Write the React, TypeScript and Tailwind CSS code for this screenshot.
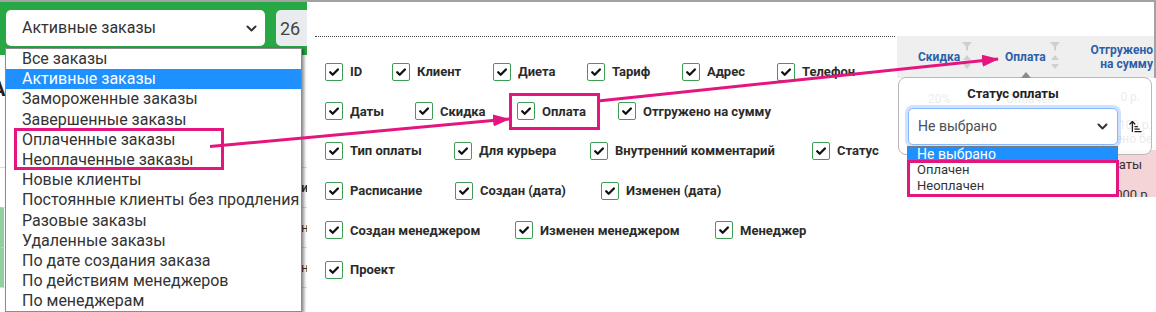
import { ArrowUpNarrowWide } from "lucide-react";

const orderFilters = [
  "Все заказы",
  "Активные заказы",
  "Замороженные заказы",
  "Завершенные заказы",
  "Оплаченные заказы",
  "Неоплаченные заказы",
  "Новые клиенты",
  "Постоянные клиенты без продления",
  "Разовые заказы",
  "Удаленные заказы",
  "По дате создания заказа",
  "По действиям менеджеров",
  "По менеджерам",
];

// label + width of the slot (distance to next checkbox)
const columnRows: [string, string][][] = [
  [["ID", "w-[67px]"], ["Клиент", "w-[101px]"], ["Диета", "w-[94px]"], ["Тариф", "w-[95px]"], ["Адрес", "w-[95px]"], ["Телефон", ""]],
  [["Даты", "w-[90px]"], ["Скидка", "w-[102px]"], ["Оплата", "w-[101px]"], ["Отгружено на сумму", ""]],
  [["Тип оплаты", "w-[129px]"], ["Для курьера", "w-[136px]"], ["Внутренний комментарий", "w-[222px]"], ["Статус", ""]],
  [["Расписание", "w-[130px]"], ["Создан (дата)", "w-[146px]"], ["Изменен (дата)", ""]],
  [["Создан менеджером", "w-[190px]"], ["Изменен менеджером", "w-[200px]"], ["Менеджер", ""]],
  [["Проект", ""]],
];

function Chevron() {
  return (
    <svg width="11" height="7" viewBox="0 0 11 7">
      <path d="M1.5 1.5l4 4 4-4" stroke="#333" strokeWidth="2" fill="none" strokeLinecap="round" strokeLinejoin="round" />
    </svg>
  );
}

function Funnel() {
  return (
    <svg width="10" height="9" viewBox="0 0 10 9">
      <path d="M0 0h10L6 4.5V9L4 8V4.5z" fill="#cfcfcf" />
    </svg>
  );
}

function Tri({ up }: { up?: boolean }) {
  return (
    <svg width="8" height="5" viewBox="0 0 8 5">
      <path d={up ? "M0 5L4 0l4 5z" : "M0 0h8L4 5z"} fill="#cfcfcf" />
    </svg>
  );
}

function Check() {
  return (
    <span className="flex h-[18px] w-[18px] shrink-0 items-center justify-center rounded-[2px] border-[1.5px] border-[#3f9e55] bg-white">
      <svg width="12" height="12" viewBox="0 0 12 12">
        <path d="M2.2 6.3l2.5 2.5L9.9 3.5" stroke="#111" strokeWidth="2.3" fill="none" strokeLinecap="round" strokeLinejoin="round" />
      </svg>
    </span>
  );
}

function OrdersPanel() {
  return (
    <div className="relative h-full w-[307px] shrink-0 overflow-hidden bg-white">
      <div className="flex h-[55px] items-start gap-[11px] bg-[#28a745] pl-[6px] pt-[10px]">
        <div className="flex h-[36px] w-[259px] shrink-0 items-center justify-between rounded-[5px] bg-white pl-[16px] pr-[8px] text-[16px] text-[#333]">
          Активные заказы
          <Chevron />
        </div>
        <div className="flex h-[36px] w-[50px] shrink-0 items-center rounded-l-[5px] bg-[#e9ecef] pl-[4px] text-[18px] text-[#444]">
          26
        </div>
      </div>

      {/* страница под выпадающим списком */}
      <div className="pt-[22px]">
        <h2 className="-ml-[8px] text-[20px] font-bold leading-[24px] text-[#222]">Активные заказы</h2>
        <div className="mt-[66px]">
          <div className="h-[40px] border-t border-[#dcdcdc] pl-[301px] pt-[10px] text-[13px] font-bold whitespace-nowrap">ис</div>
          <div className="h-[40px] border-t border-l-4 border-[#dcdcdc] border-l-[#8fd19e] pl-[297px] pt-[10px] text-[13px] whitespace-nowrap">не</div>
          <div className="h-[40px] border-t border-l-4 border-[#dcdcdc] border-l-[#8fd19e] pl-[297px] pt-[10px] text-[13px] whitespace-nowrap">не</div>
          <div className="h-[20px] border-t border-[#dcdcdc]" />
        </div>
      </div>

      <ul className="absolute left-[5px] top-[48px] w-[297px] border border-[#8c8c8c] bg-white shadow-[2px_1px_3px_rgba(0,0,0,0.45)]">
        {orderFilters.map((f, i) => (
          <li
            key={f}
            className={
              i === 1
                ? "h-[20.2px] whitespace-nowrap bg-[#1e90ff] pl-[16px] text-[16px] leading-[20px] text-white"
                : "h-[20.2px] whitespace-nowrap pl-[16px] text-[16px] leading-[20px] text-[#333]"
            }
          >
            {f}
          </li>
        ))}
      </ul>
    </div>
  );
}

function ColumnsPanel() {
  return (
    <div className="h-full w-[590px] shrink-0 bg-white pt-[36px]">
      <div className="ml-[8px] w-[580px] border-t border-dotted border-[#444]" />
      <div className="mt-[15px] flex flex-col pl-[18px]">
        {columnRows.map((row, r) => (
          <div key={r} className="flex h-[39.6px] items-center">
            {row.map(([label, w]) => (
              <div key={label} className={`flex shrink-0 items-center gap-[7px] ${w}`}>
                <Check />
                <span className="whitespace-nowrap text-[13px] font-bold leading-none text-[#2b2b2b]">{label}</span>
              </div>
            ))}
          </div>
        ))}
      </div>
    </div>
  );
}

function TablePanel() {
  return (
    <div className="relative h-full w-[259px] shrink-0 bg-white">
      <div className="h-[36px] border-r-2 border-[#a2a2a2]" />
      <div className="flex h-[42px] border-r-2 border-[#a2a2a2] bg-[#efefef] text-[12px] font-bold text-[#2d5fa8]">
        <div className="flex w-[78px] shrink-0 items-stretch gap-[2px] pl-[21px]">
          <span className="self-center">Скидка</span>
          <div className="flex flex-col items-center gap-[4px] pt-[6px]">
            <Funnel />
            <Tri up />
            <Tri />
          </div>
        </div>
        <div className="flex w-[93px] shrink-0 items-stretch gap-[4px] pl-[30px]">
          <span className="self-center">Оплата</span>
          <div className="flex flex-col items-center gap-[4px] pt-[6px]">
            <Funnel />
            <Tri up />
            <Tri />
          </div>
        </div>
        <div className="flex-1 pr-[1px] pt-[7px] text-right leading-[14px]">
          Отгружено
          <br />
          на сумму
        </div>
      </div>

      <div className="flex h-[72px] text-[12px] text-[#777]">
        <div className="w-[78px] shrink-0 pl-[31px] pt-[12px]">20%</div>
        <div className="w-[93px] shrink-0 pl-[31px] pt-[12px]">Оплачен</div>
        <div className="flex-1 pr-[4px] pt-[12px] text-right leading-[14px]">
          <div className="pr-[12px]">0 р.</div>
          <div className="mt-[14px]">100 р.</div>
          <div className="whitespace-nowrap">Отгружено бе</div>
        </div>
      </div>

      <div className="flex h-[47px] overflow-hidden">
        <div className="w-[83px] shrink-0" />
        <div className="flex flex-1 flex-col justify-between bg-[#f4d4d7] text-[13px] text-[#333]">
          <div className="pr-[14px] pt-[5px] text-right">оплаты</div>
          <div className="-mb-[5px] flex justify-between pl-[10px] pr-[5px] leading-[14px]">
            <span className="text-[11px] text-[#555]">Стоим.: 26000 р.</span>
            <span>19000 р.</span>
          </div>
        </div>
      </div>

      {/* поповер фильтра */}
      <div className="absolute left-[1px] top-[77px] h-[78px] w-[254px] rounded-[8px] border border-[#b8b8b8] bg-white/85">
        <div className="absolute -top-[6px] left-[122px] h-0 w-0 border-b-[6px] border-l-[5px] border-r-[5px] border-b-[#8a8a8a] border-l-transparent border-r-transparent" />
        <div className="pr-[24px] pt-[7px] text-center text-[13px] font-bold leading-[18px] text-[#222]">Статус оплаты</div>
        <div className="mt-[5px] flex items-center gap-[10px] pl-[9px]">
          <div className="flex h-[37px] w-[210px] items-center justify-between rounded-[5px] border border-[#86b7fe] bg-white pl-[9px] pr-[9px] text-[14px] text-[#495057] shadow-[0_0_0_3px_rgba(13,110,253,0.2)]">
            Не выбрано
            <Chevron />
          </div>
          <ArrowUpNarrowWide size={15} strokeWidth={2} color="#222" />
        </div>
      </div>

      <ul className="absolute left-[10px] top-[146px] w-[211px] border border-[#7a7a7a] bg-white">
        <li className="h-[15px] bg-[#1e90ff] pl-[9px] text-[14px] leading-[15px] text-white">Не выбрано</li>
        <li className="h-[16px] pl-[9px] text-[13px] leading-[16px] text-[#333]">Оплачен</li>
        <li className="h-[16px] pl-[9px] text-[13px] leading-[16px] text-[#333]">Неоплачен</li>
      </ul>
    </div>
  );
}

function Annotations() {
  const pink = "#e5157f";
  return (
    <svg className="pointer-events-none absolute inset-0" width="1156" height="312">
      <defs>
        <marker id="ah" markerUnits="userSpaceOnUse" markerWidth="17" markerHeight="12" refX="16" refY="6" orient="auto" viewBox="0 0 17 12">
          <path d="M0 0L17 6L0 12z" fill={pink} />
        </marker>
      </defs>
      <rect x="15.5" y="129.5" width="207" height="39" fill="none" stroke={pink} strokeWidth="3" />
      <rect x="510.5" y="94.5" width="88" height="34" fill="none" stroke={pink} strokeWidth="3" />
      <rect x="908.5" y="161.5" width="209" height="34" fill="none" stroke={pink} strokeWidth="3" />
      <line x1="210" y1="146.5" x2="509" y2="119" stroke={pink} strokeWidth="3" markerEnd="url(#ah)" />
      <line x1="598" y1="101" x2="998" y2="59" stroke={pink} strokeWidth="3" markerEnd="url(#ah)" />
    </svg>
  );
}

export default function App() {
  return (
    <div className="relative flex h-[312px] w-[1156px] overflow-hidden bg-white font-[Roboto,sans-serif] text-[#333]">
      <OrdersPanel />
      <ColumnsPanel />
      <TablePanel />
      <div className="absolute left-0 right-0 top-0 h-[2px] bg-[#a2a2a2]" />
      <Annotations />
    </div>
  );
}
